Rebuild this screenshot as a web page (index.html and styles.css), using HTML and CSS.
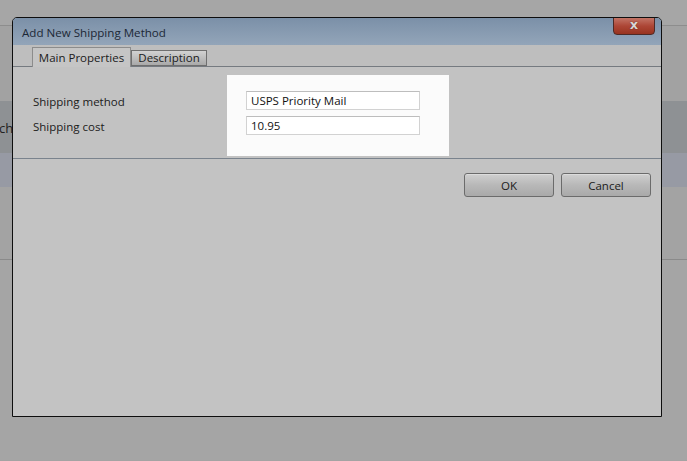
FILE: index.html
```html
<!DOCTYPE html>
<html>
<head>
<meta charset="utf-8">
<link rel="stylesheet" href="styles.css">
</head>
<body>
<div class="page">
  <div class="topbar"></div>
  <div class="spacer"></div>
  <div class="toolbar"><span class="search">ch</span></div>
  <div class="band"></div>
  <div class="gap"></div>
  <div class="rest"></div>
</div>
<div class="dialog">
  <div class="titlebar">
    <span class="title">Add New Shipping Method</span>
    <div class="close">x</div>
  </div>
  <div class="tabstrip">
    <div class="tab active">Main Properties</div>
    <div class="tab">Description</div>
  </div>
  <div class="content">
    <div class="labels">
      <div class="label">Shipping method</div>
      <div class="label">Shipping cost</div>
    </div>
    <div class="fields">
      <div class="input">USPS Priority Mail</div>
      <div class="input">10.95</div>
    </div>
  </div>
  <div class="footer">
    <div class="btn">OK</div>
    <div class="btn">Cancel</div>
  </div>
</div>
</body>
</html>
```

FILE: styles.css
```css
html, body {
  margin: 0;
  padding: 0;
}
body {
  width: 687px;
  height: 461px;
  overflow: hidden;
  position: relative;
  background: #a3a3a3;
  font-family: "Open Sans", "Noto Sans", sans-serif;
  font-size: 11.5px;
  color: #1b1b1b;
}
.page {
  display: flex;
  flex-direction: column;
}
.topbar {
  height: 25px;
  background: #a6a6a6;
  border-bottom: 1px solid #8d8d8d;
}
.spacer {
  height: 75px;
  background: #a2a2a2;
}
.toolbar {
  height: 52px;
  background: #8e9194;
  display: flex;
  align-items: center;
}
.search {
  margin-left: -1px;
  color: #222;
  font-size: 13px;
  padding-top: 2px;
}
.band {
  height: 34px;
  background: #979aa4;
}
.gap {
  height: 72px;
  background: #a3a3a3;
  border-bottom: 1px solid #8a8a8a;
}
.rest {
  height: 200px;
  background: #a5a5a5;
}
.dialog {
  position: absolute;
  left: 12px;
  top: 17px;
  width: 648px;
  height: 398px;
  border: 1px solid #0e0e0e;
  border-radius: 5px 5px 0 0;
  background: #c3c3c3;
  display: flex;
  flex-direction: column;
  overflow: hidden;
}
.titlebar {
  height: 27px;
  background: linear-gradient(#7b90a8, #93a5b9);
  position: relative;
  display: flex;
  align-items: center;
  padding-left: 9px;
}
.title {
  color: #1c2836;
  font-size: 11.6px;
  padding-top: 1px;
}
.close {
  position: absolute;
  top: -1px;
  right: 6px;
  width: 40px;
  height: 16px;
  border: 1px solid #4e2a26;
  border-radius: 0 0 4px 4px;
  background: linear-gradient(#c27466, #ad4636 50%, #98331f);
  color: #dcd6d4;
  font-family: "DejaVu Sans", sans-serif;
  font-weight: bold;
  font-size: 13px;
  line-height: 13px;
  text-align: center;
  text-shadow: 0 0 1px #3a1a16;
}
.tabstrip {
  height: 21px;
  background: #bebebe;
  border-bottom: 1px solid #757a80;
  display: flex;
  align-items: flex-end;
  padding-left: 19px;
}
.tab {
  box-sizing: border-box;
  height: 16px;
  width: 76px;
  border: 1px solid #6f6f6f;
  background: linear-gradient(#d2d2d2, #a9a9a9);
  text-align: center;
  line-height: 14px;
  color: #1b1b1b;
}
.tab.active {
  height: 20px;
  width: 99px;
  margin-bottom: -1px;
  border: 1px solid #8c8c8c;
  border-bottom: none;
  background: #c5c5c5;
  line-height: 20px;
  z-index: 1;
}
.content {
  box-sizing: border-box;
  height: 92px;
  background: #c2c2c2;
  border-bottom: 1px solid #7a838d;
  display: flex;
  padding-top: 8px;
}
.labels {
  width: 194px;
  padding-left: 20px;
  padding-top: 17px;
  display: flex;
  flex-direction: column;
  gap: 6px;
}
.label {
  height: 19px;
  line-height: 19px;
}
.fields {
  width: 222px;
  height: 81px;
  box-sizing: border-box;
  background: #fbfbfb;
  padding: 16px 0 0 19px;
  display: flex;
  flex-direction: column;
  gap: 6px;
}
.input {
  box-sizing: border-box;
  width: 174px;
  height: 19px;
  border: 1px solid #d2d2d2;
  border-top-color: #bdbdbd;
  background: #ffffff;
  padding-left: 4px;
  line-height: 18px;
  color: #111;
}
.footer {
  display: flex;
  justify-content: flex-end;
  gap: 7px;
  padding: 14px 10px 0 0;
}
.btn {
  box-sizing: border-box;
  width: 90px;
  height: 24px;
  border: 1px solid #6b6b6b;
  border-radius: 3px;
  background: linear-gradient(#cfcfcf, #b8b8b8 50%, #a9a9a9);
  box-shadow: inset 0 1px 0 #dcdcdc;
  text-align: center;
  line-height: 24px;
  color: #1b1b1b;
}
```
